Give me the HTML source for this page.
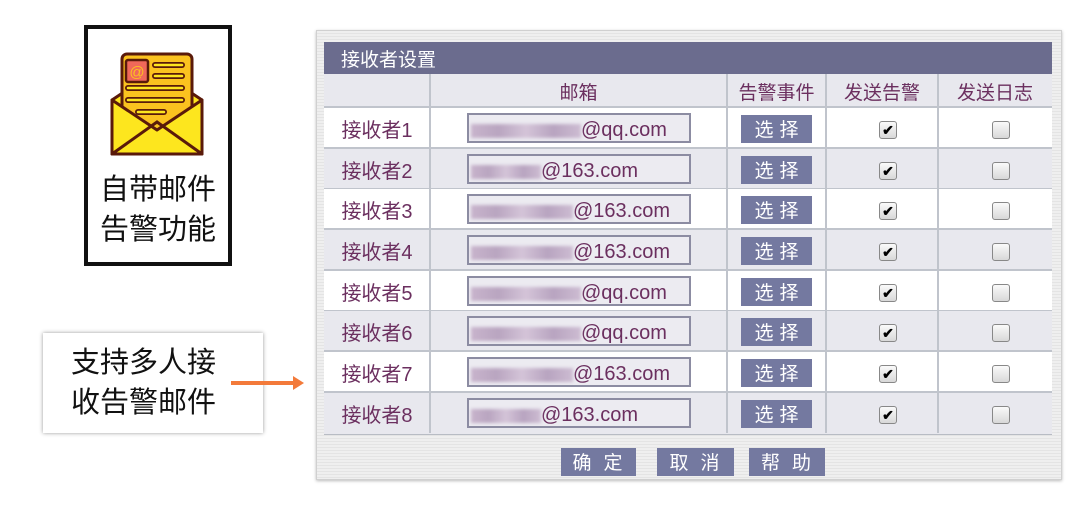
<!DOCTYPE html>
<html><head><meta charset="utf-8"><style>
*{margin:0;padding:0;box-sizing:border-box}
body{width:1090px;height:511px;background:#fff;position:relative;overflow:hidden;font-family:"Liberation Sans","Noto Sans CJK SC",sans-serif}
.a{position:absolute}
.panel{left:316px;top:30px;width:746px;height:450px;background:repeating-linear-gradient(#efefef 0 2px,#e4e4e4 2px 3px);border:1px solid #d0d0d0;box-shadow:0 1px 3px #bbb}
.hdr{left:324px;top:42px;width:728px;height:32px;background:#6b6c8e;color:#fff;font-size:19px;line-height:38px;padding-left:17px}
.tbl{left:324px;top:74px;width:728px;height:361px;border:2px solid #b8bcc4;border-top:none}
.row{position:absolute;left:324px;width:728px;height:41px;border-bottom:2px solid #c0c4cc}
.vl{position:absolute;top:74px;width:2px;height:359px;background:#c0c4cc}
.ch{position:absolute;top:74px;height:34px;line-height:40px;color:#6b2f5f;font-size:19px;text-align:center}
.lab{position:absolute;left:0;width:106px;text-align:center;color:#6b2f5f;font-size:20px;line-height:46px}
.inp{position:absolute;left:143px;top:5px;width:224px;height:30px;background:#ecebf1;border:2px solid #8c8ca2;color:#6b2f5f;font-size:20px;line-height:30px;white-space:nowrap;overflow:hidden}
.blur{display:inline-block;vertical-align:middle;height:14px;background:linear-gradient(90deg,#c8b4cc,#b9a5c0,#d4c4d8,#b8a4c0,#cdbcd2);filter:blur(1.5px);margin-left:2px}
.btn{position:absolute;left:417px;top:7px;width:71px;height:28px;background:#7479a0;color:#fff;font-size:19px;line-height:31px;text-align:center;letter-spacing:6px;padding-left:6px}
.cb{position:absolute;top:13px;width:18px;height:18px;border:1px solid #888;border-radius:3px;background:linear-gradient(#fafafa,#d8d8d8)}
.cb1{left:555px;font-size:14px;line-height:16px;text-align:center;color:#000;font-weight:bold}
.cb2{left:668px}
.bb{position:absolute;top:448px;height:28px;background:#7479a0;color:#fff;font-size:19px;line-height:31px;text-align:center;letter-spacing:12px;padding-left:10px}
</style></head><body>
<div class="a" style="left:84px;top:25px;width:148px;height:241px;border:4px solid #111;background:#fff"></div>
<svg class="a" style="left:110px;top:52px" width="94" height="106" viewBox="0 0 94 106">
<path d="M2 48 L47 18 L92 48 L92 102 L2 102 Z" fill="#fde61e" stroke="#5a1a0a" stroke-width="3" stroke-linejoin="round"/>
<rect x="12" y="2" width="70" height="86" rx="5" fill="#fbc21f" stroke="#5a1a0a" stroke-width="3"/>
<rect x="16" y="8" width="22" height="22" rx="2" fill="#f0685a" stroke="#5a1a0a" stroke-width="2.5"/>
<text x="27" y="25" font-size="15" fill="#fbc21f" text-anchor="middle" font-family="Liberation Sans">@</text>
<g stroke="#5a1a0a" stroke-width="6" stroke-linecap="round"><line x1="45" y1="13" x2="72" y2="13"/><line x1="45" y1="24" x2="72" y2="24"/><line x1="18" y1="36" x2="72" y2="36"/><line x1="18" y1="48" x2="72" y2="48"/><line x1="28" y1="60" x2="54" y2="60"/></g>
<g stroke="#fde61e" stroke-width="2.5" stroke-linecap="round"><line x1="45" y1="13" x2="72" y2="13"/><line x1="45" y1="24" x2="72" y2="24"/><line x1="18" y1="36" x2="72" y2="36"/><line x1="18" y1="48" x2="72" y2="48"/><line x1="28" y1="60" x2="54" y2="60"/></g>
<path d="M2 48 L47 78 L92 48 L92 102 L2 102 Z" fill="#fde61e" stroke="#5a1a0a" stroke-width="3" stroke-linejoin="round"/>
<path d="M2 102 L47 70 L92 102" fill="none" stroke="#5a1a0a" stroke-width="3"/>
</svg>
<div class="a" style="left:88px;top:170px;width:140px;text-align:center;font-size:29px;line-height:40px;color:#111">自带邮件<br>告警功能</div>
<div class="a" style="left:43px;top:333px;width:220px;height:100px;background:#fff;box-shadow:0 0 4px #999;font-size:29px;line-height:40px;color:#111;padding:10px 0 0 28px">支持多人接<br>收告警邮件</div>
<div class="a" style="left:231px;top:381px;width:64px;height:4px;background:#f37a3a"></div>
<div class="a" style="left:293px;top:376px;width:0;height:0;border-left:11px solid #f37a3a;border-top:7px solid transparent;border-bottom:7px solid transparent"></div>

<div class="a panel"></div>
<div class="a hdr">接收者设置</div>
<div class="a tbl" style="background:#e8e8ee"></div>
<div class="row" style="top:74px;height:34px;background:#e8e8ee"></div>
<div class="ch" style="left:430px;width:297px">邮箱</div>
<div class="ch" style="left:727px;width:99px">告警事件</div>
<div class="ch" style="left:826px;width:112px">发送告警</div>
<div class="ch" style="left:938px;width:114px">发送日志</div>

<div class="row" style="top:108px;background:#fff"><div class="lab">接收者1</div><div class="inp"><span class="blur" style="width:110px"></span>@qq.com</div><div class="btn">选择</div><div class="cb cb1">✔</div><div class="cb cb2"></div></div>
<div class="row" style="top:149px;background:#e8e8ee"><div class="lab">接收者2</div><div class="inp"><span class="blur" style="width:70px"></span>@163.com</div><div class="btn">选择</div><div class="cb cb1">✔</div><div class="cb cb2"></div></div>
<div class="row" style="top:189px;background:#fff"><div class="lab">接收者3</div><div class="inp"><span class="blur" style="width:102px"></span>@163.com</div><div class="btn">选择</div><div class="cb cb1">✔</div><div class="cb cb2"></div></div>
<div class="row" style="top:230px;background:#e8e8ee"><div class="lab">接收者4</div><div class="inp"><span class="blur" style="width:102px"></span>@163.com</div><div class="btn">选择</div><div class="cb cb1">✔</div><div class="cb cb2"></div></div>
<div class="row" style="top:271px;background:#fff"><div class="lab">接收者5</div><div class="inp"><span class="blur" style="width:110px"></span>@qq.com</div><div class="btn">选择</div><div class="cb cb1">✔</div><div class="cb cb2"></div></div>
<div class="row" style="top:311px;background:#e8e8ee"><div class="lab">接收者6</div><div class="inp"><span class="blur" style="width:110px"></span>@qq.com</div><div class="btn">选择</div><div class="cb cb1">✔</div><div class="cb cb2"></div></div>
<div class="row" style="top:352px;background:#fff"><div class="lab">接收者7</div><div class="inp"><span class="blur" style="width:102px"></span>@163.com</div><div class="btn">选择</div><div class="cb cb1">✔</div><div class="cb cb2"></div></div>
<div class="row" style="top:393px;background:#e8e8ee;border-bottom:none"><div class="lab">接收者8</div><div class="inp"><span class="blur" style="width:70px"></span>@163.com</div><div class="btn">选择</div><div class="cb cb1">✔</div><div class="cb cb2"></div></div>

<div class="vl" style="left:429px"></div>
<div class="vl" style="left:726px"></div>
<div class="vl" style="left:825px"></div>
<div class="vl" style="left:937px"></div>

<div class="bb" style="left:561px;width:75px">确定</div>
<div class="bb" style="left:657px;width:77px">取消</div>
<div class="bb" style="left:749px;width:76px">帮助</div>
</body></html>
